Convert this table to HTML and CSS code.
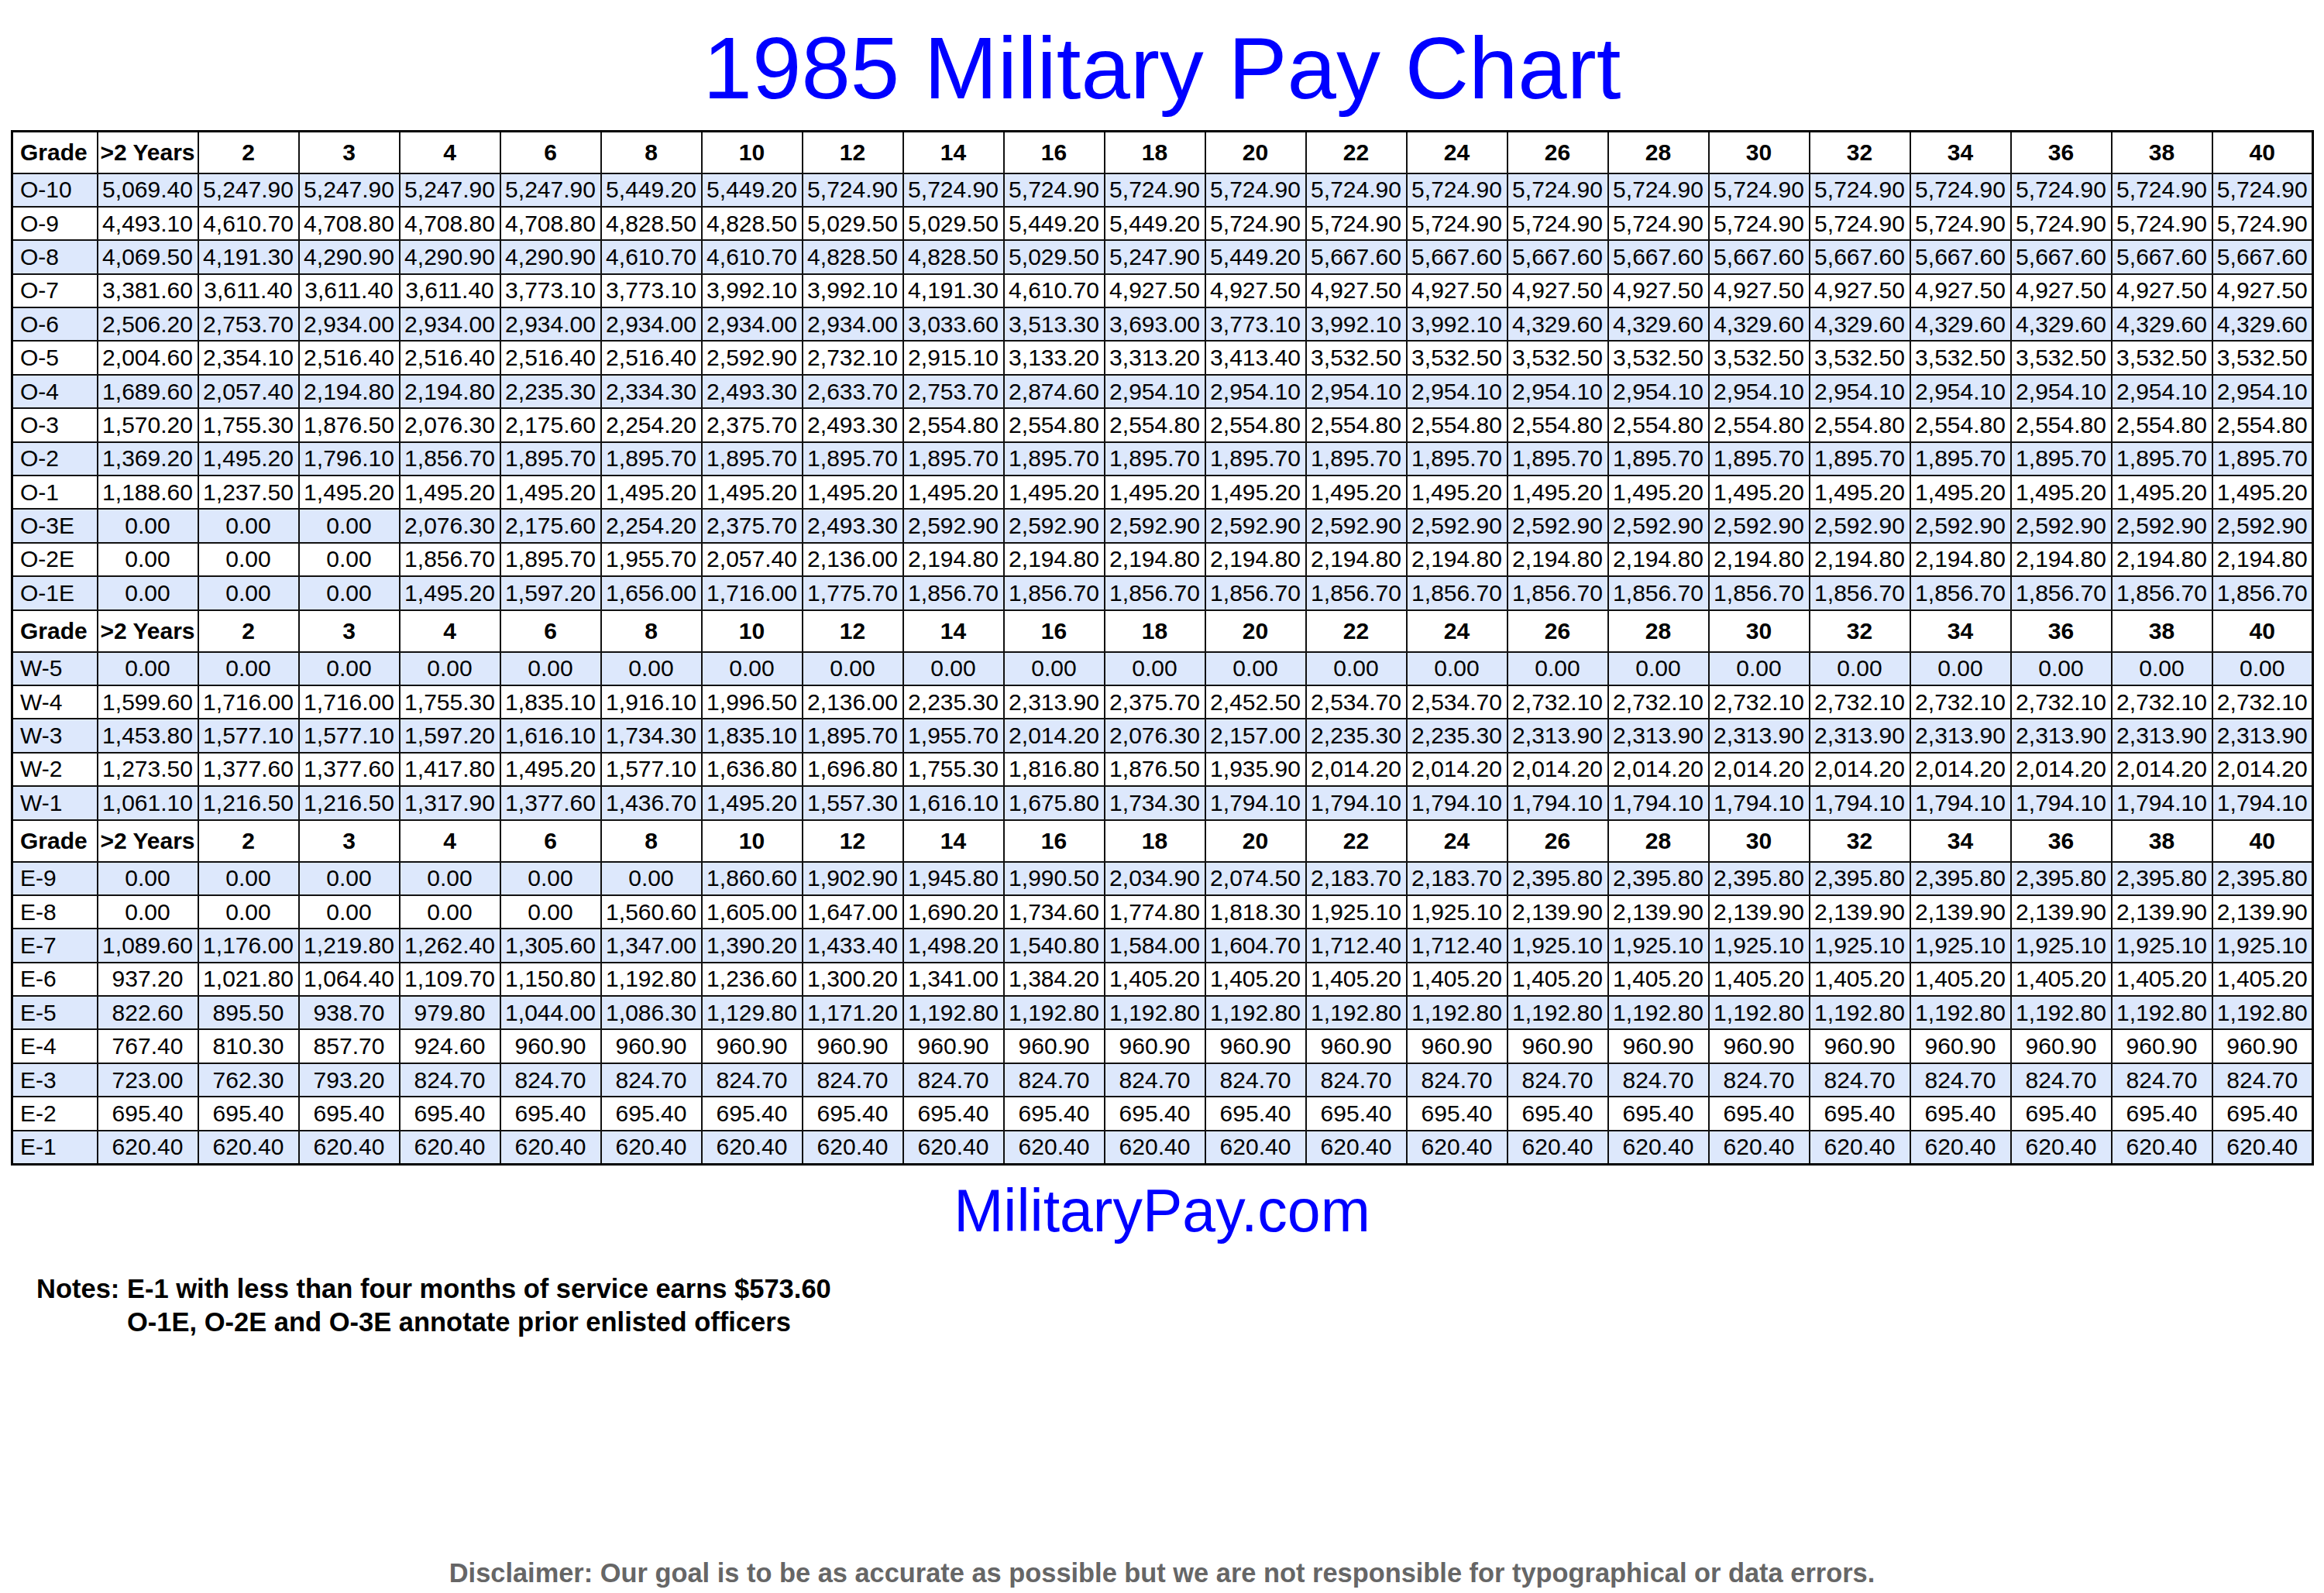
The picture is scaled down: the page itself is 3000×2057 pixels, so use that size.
FILE: index.html
```html
<!DOCTYPE html>
<html lang="en">
<head>
<meta charset="utf-8">
<title>1985 Military Pay Chart</title>
<link rel="stylesheet" href="styles.css">
</head>
<body>
<div class="page">
<h1 class="title">1985 Military Pay Chart</h1>
<table class="pay">
<colgroup><col class="c-grade"><col span="22" class="c-val"></colgroup>
<tbody>
<tr class="hdr"><td class="g">Grade</td><td>&gt;2 Years</td><td>2</td><td>3</td><td>4</td><td>6</td><td>8</td><td>10</td><td>12</td><td>14</td><td>16</td><td>18</td><td>20</td><td>22</td><td>24</td><td>26</td><td>28</td><td>30</td><td>32</td><td>34</td><td>36</td><td>38</td><td>40</td></tr>
<tr class="row alt"><td class="g">O-10</td><td>5,069.40</td><td>5,247.90</td><td>5,247.90</td><td>5,247.90</td><td>5,247.90</td><td>5,449.20</td><td>5,449.20</td><td>5,724.90</td><td>5,724.90</td><td>5,724.90</td><td>5,724.90</td><td>5,724.90</td><td>5,724.90</td><td>5,724.90</td><td>5,724.90</td><td>5,724.90</td><td>5,724.90</td><td>5,724.90</td><td>5,724.90</td><td>5,724.90</td><td>5,724.90</td><td>5,724.90</td></tr>
<tr class="row"><td class="g">O-9</td><td>4,493.10</td><td>4,610.70</td><td>4,708.80</td><td>4,708.80</td><td>4,708.80</td><td>4,828.50</td><td>4,828.50</td><td>5,029.50</td><td>5,029.50</td><td>5,449.20</td><td>5,449.20</td><td>5,724.90</td><td>5,724.90</td><td>5,724.90</td><td>5,724.90</td><td>5,724.90</td><td>5,724.90</td><td>5,724.90</td><td>5,724.90</td><td>5,724.90</td><td>5,724.90</td><td>5,724.90</td></tr>
<tr class="row alt"><td class="g">O-8</td><td>4,069.50</td><td>4,191.30</td><td>4,290.90</td><td>4,290.90</td><td>4,290.90</td><td>4,610.70</td><td>4,610.70</td><td>4,828.50</td><td>4,828.50</td><td>5,029.50</td><td>5,247.90</td><td>5,449.20</td><td>5,667.60</td><td>5,667.60</td><td>5,667.60</td><td>5,667.60</td><td>5,667.60</td><td>5,667.60</td><td>5,667.60</td><td>5,667.60</td><td>5,667.60</td><td>5,667.60</td></tr>
<tr class="row"><td class="g">O-7</td><td>3,381.60</td><td>3,611.40</td><td>3,611.40</td><td>3,611.40</td><td>3,773.10</td><td>3,773.10</td><td>3,992.10</td><td>3,992.10</td><td>4,191.30</td><td>4,610.70</td><td>4,927.50</td><td>4,927.50</td><td>4,927.50</td><td>4,927.50</td><td>4,927.50</td><td>4,927.50</td><td>4,927.50</td><td>4,927.50</td><td>4,927.50</td><td>4,927.50</td><td>4,927.50</td><td>4,927.50</td></tr>
<tr class="row alt"><td class="g">O-6</td><td>2,506.20</td><td>2,753.70</td><td>2,934.00</td><td>2,934.00</td><td>2,934.00</td><td>2,934.00</td><td>2,934.00</td><td>2,934.00</td><td>3,033.60</td><td>3,513.30</td><td>3,693.00</td><td>3,773.10</td><td>3,992.10</td><td>3,992.10</td><td>4,329.60</td><td>4,329.60</td><td>4,329.60</td><td>4,329.60</td><td>4,329.60</td><td>4,329.60</td><td>4,329.60</td><td>4,329.60</td></tr>
<tr class="row"><td class="g">O-5</td><td>2,004.60</td><td>2,354.10</td><td>2,516.40</td><td>2,516.40</td><td>2,516.40</td><td>2,516.40</td><td>2,592.90</td><td>2,732.10</td><td>2,915.10</td><td>3,133.20</td><td>3,313.20</td><td>3,413.40</td><td>3,532.50</td><td>3,532.50</td><td>3,532.50</td><td>3,532.50</td><td>3,532.50</td><td>3,532.50</td><td>3,532.50</td><td>3,532.50</td><td>3,532.50</td><td>3,532.50</td></tr>
<tr class="row alt"><td class="g">O-4</td><td>1,689.60</td><td>2,057.40</td><td>2,194.80</td><td>2,194.80</td><td>2,235.30</td><td>2,334.30</td><td>2,493.30</td><td>2,633.70</td><td>2,753.70</td><td>2,874.60</td><td>2,954.10</td><td>2,954.10</td><td>2,954.10</td><td>2,954.10</td><td>2,954.10</td><td>2,954.10</td><td>2,954.10</td><td>2,954.10</td><td>2,954.10</td><td>2,954.10</td><td>2,954.10</td><td>2,954.10</td></tr>
<tr class="row"><td class="g">O-3</td><td>1,570.20</td><td>1,755.30</td><td>1,876.50</td><td>2,076.30</td><td>2,175.60</td><td>2,254.20</td><td>2,375.70</td><td>2,493.30</td><td>2,554.80</td><td>2,554.80</td><td>2,554.80</td><td>2,554.80</td><td>2,554.80</td><td>2,554.80</td><td>2,554.80</td><td>2,554.80</td><td>2,554.80</td><td>2,554.80</td><td>2,554.80</td><td>2,554.80</td><td>2,554.80</td><td>2,554.80</td></tr>
<tr class="row alt"><td class="g">O-2</td><td>1,369.20</td><td>1,495.20</td><td>1,796.10</td><td>1,856.70</td><td>1,895.70</td><td>1,895.70</td><td>1,895.70</td><td>1,895.70</td><td>1,895.70</td><td>1,895.70</td><td>1,895.70</td><td>1,895.70</td><td>1,895.70</td><td>1,895.70</td><td>1,895.70</td><td>1,895.70</td><td>1,895.70</td><td>1,895.70</td><td>1,895.70</td><td>1,895.70</td><td>1,895.70</td><td>1,895.70</td></tr>
<tr class="row"><td class="g">O-1</td><td>1,188.60</td><td>1,237.50</td><td>1,495.20</td><td>1,495.20</td><td>1,495.20</td><td>1,495.20</td><td>1,495.20</td><td>1,495.20</td><td>1,495.20</td><td>1,495.20</td><td>1,495.20</td><td>1,495.20</td><td>1,495.20</td><td>1,495.20</td><td>1,495.20</td><td>1,495.20</td><td>1,495.20</td><td>1,495.20</td><td>1,495.20</td><td>1,495.20</td><td>1,495.20</td><td>1,495.20</td></tr>
<tr class="row alt"><td class="g">O-3E</td><td>0.00</td><td>0.00</td><td>0.00</td><td>2,076.30</td><td>2,175.60</td><td>2,254.20</td><td>2,375.70</td><td>2,493.30</td><td>2,592.90</td><td>2,592.90</td><td>2,592.90</td><td>2,592.90</td><td>2,592.90</td><td>2,592.90</td><td>2,592.90</td><td>2,592.90</td><td>2,592.90</td><td>2,592.90</td><td>2,592.90</td><td>2,592.90</td><td>2,592.90</td><td>2,592.90</td></tr>
<tr class="row"><td class="g">O-2E</td><td>0.00</td><td>0.00</td><td>0.00</td><td>1,856.70</td><td>1,895.70</td><td>1,955.70</td><td>2,057.40</td><td>2,136.00</td><td>2,194.80</td><td>2,194.80</td><td>2,194.80</td><td>2,194.80</td><td>2,194.80</td><td>2,194.80</td><td>2,194.80</td><td>2,194.80</td><td>2,194.80</td><td>2,194.80</td><td>2,194.80</td><td>2,194.80</td><td>2,194.80</td><td>2,194.80</td></tr>
<tr class="row alt"><td class="g">O-1E</td><td>0.00</td><td>0.00</td><td>0.00</td><td>1,495.20</td><td>1,597.20</td><td>1,656.00</td><td>1,716.00</td><td>1,775.70</td><td>1,856.70</td><td>1,856.70</td><td>1,856.70</td><td>1,856.70</td><td>1,856.70</td><td>1,856.70</td><td>1,856.70</td><td>1,856.70</td><td>1,856.70</td><td>1,856.70</td><td>1,856.70</td><td>1,856.70</td><td>1,856.70</td><td>1,856.70</td></tr>
<tr class="hdr"><td class="g">Grade</td><td>&gt;2 Years</td><td>2</td><td>3</td><td>4</td><td>6</td><td>8</td><td>10</td><td>12</td><td>14</td><td>16</td><td>18</td><td>20</td><td>22</td><td>24</td><td>26</td><td>28</td><td>30</td><td>32</td><td>34</td><td>36</td><td>38</td><td>40</td></tr>
<tr class="row alt"><td class="g">W-5</td><td>0.00</td><td>0.00</td><td>0.00</td><td>0.00</td><td>0.00</td><td>0.00</td><td>0.00</td><td>0.00</td><td>0.00</td><td>0.00</td><td>0.00</td><td>0.00</td><td>0.00</td><td>0.00</td><td>0.00</td><td>0.00</td><td>0.00</td><td>0.00</td><td>0.00</td><td>0.00</td><td>0.00</td><td>0.00</td></tr>
<tr class="row"><td class="g">W-4</td><td>1,599.60</td><td>1,716.00</td><td>1,716.00</td><td>1,755.30</td><td>1,835.10</td><td>1,916.10</td><td>1,996.50</td><td>2,136.00</td><td>2,235.30</td><td>2,313.90</td><td>2,375.70</td><td>2,452.50</td><td>2,534.70</td><td>2,534.70</td><td>2,732.10</td><td>2,732.10</td><td>2,732.10</td><td>2,732.10</td><td>2,732.10</td><td>2,732.10</td><td>2,732.10</td><td>2,732.10</td></tr>
<tr class="row alt"><td class="g">W-3</td><td>1,453.80</td><td>1,577.10</td><td>1,577.10</td><td>1,597.20</td><td>1,616.10</td><td>1,734.30</td><td>1,835.10</td><td>1,895.70</td><td>1,955.70</td><td>2,014.20</td><td>2,076.30</td><td>2,157.00</td><td>2,235.30</td><td>2,235.30</td><td>2,313.90</td><td>2,313.90</td><td>2,313.90</td><td>2,313.90</td><td>2,313.90</td><td>2,313.90</td><td>2,313.90</td><td>2,313.90</td></tr>
<tr class="row"><td class="g">W-2</td><td>1,273.50</td><td>1,377.60</td><td>1,377.60</td><td>1,417.80</td><td>1,495.20</td><td>1,577.10</td><td>1,636.80</td><td>1,696.80</td><td>1,755.30</td><td>1,816.80</td><td>1,876.50</td><td>1,935.90</td><td>2,014.20</td><td>2,014.20</td><td>2,014.20</td><td>2,014.20</td><td>2,014.20</td><td>2,014.20</td><td>2,014.20</td><td>2,014.20</td><td>2,014.20</td><td>2,014.20</td></tr>
<tr class="row alt"><td class="g">W-1</td><td>1,061.10</td><td>1,216.50</td><td>1,216.50</td><td>1,317.90</td><td>1,377.60</td><td>1,436.70</td><td>1,495.20</td><td>1,557.30</td><td>1,616.10</td><td>1,675.80</td><td>1,734.30</td><td>1,794.10</td><td>1,794.10</td><td>1,794.10</td><td>1,794.10</td><td>1,794.10</td><td>1,794.10</td><td>1,794.10</td><td>1,794.10</td><td>1,794.10</td><td>1,794.10</td><td>1,794.10</td></tr>
<tr class="hdr"><td class="g">Grade</td><td>&gt;2 Years</td><td>2</td><td>3</td><td>4</td><td>6</td><td>8</td><td>10</td><td>12</td><td>14</td><td>16</td><td>18</td><td>20</td><td>22</td><td>24</td><td>26</td><td>28</td><td>30</td><td>32</td><td>34</td><td>36</td><td>38</td><td>40</td></tr>
<tr class="row alt"><td class="g">E-9</td><td>0.00</td><td>0.00</td><td>0.00</td><td>0.00</td><td>0.00</td><td>0.00</td><td>1,860.60</td><td>1,902.90</td><td>1,945.80</td><td>1,990.50</td><td>2,034.90</td><td>2,074.50</td><td>2,183.70</td><td>2,183.70</td><td>2,395.80</td><td>2,395.80</td><td>2,395.80</td><td>2,395.80</td><td>2,395.80</td><td>2,395.80</td><td>2,395.80</td><td>2,395.80</td></tr>
<tr class="row"><td class="g">E-8</td><td>0.00</td><td>0.00</td><td>0.00</td><td>0.00</td><td>0.00</td><td>1,560.60</td><td>1,605.00</td><td>1,647.00</td><td>1,690.20</td><td>1,734.60</td><td>1,774.80</td><td>1,818.30</td><td>1,925.10</td><td>1,925.10</td><td>2,139.90</td><td>2,139.90</td><td>2,139.90</td><td>2,139.90</td><td>2,139.90</td><td>2,139.90</td><td>2,139.90</td><td>2,139.90</td></tr>
<tr class="row alt"><td class="g">E-7</td><td>1,089.60</td><td>1,176.00</td><td>1,219.80</td><td>1,262.40</td><td>1,305.60</td><td>1,347.00</td><td>1,390.20</td><td>1,433.40</td><td>1,498.20</td><td>1,540.80</td><td>1,584.00</td><td>1,604.70</td><td>1,712.40</td><td>1,712.40</td><td>1,925.10</td><td>1,925.10</td><td>1,925.10</td><td>1,925.10</td><td>1,925.10</td><td>1,925.10</td><td>1,925.10</td><td>1,925.10</td></tr>
<tr class="row"><td class="g">E-6</td><td>937.20</td><td>1,021.80</td><td>1,064.40</td><td>1,109.70</td><td>1,150.80</td><td>1,192.80</td><td>1,236.60</td><td>1,300.20</td><td>1,341.00</td><td>1,384.20</td><td>1,405.20</td><td>1,405.20</td><td>1,405.20</td><td>1,405.20</td><td>1,405.20</td><td>1,405.20</td><td>1,405.20</td><td>1,405.20</td><td>1,405.20</td><td>1,405.20</td><td>1,405.20</td><td>1,405.20</td></tr>
<tr class="row alt"><td class="g">E-5</td><td>822.60</td><td>895.50</td><td>938.70</td><td>979.80</td><td>1,044.00</td><td>1,086.30</td><td>1,129.80</td><td>1,171.20</td><td>1,192.80</td><td>1,192.80</td><td>1,192.80</td><td>1,192.80</td><td>1,192.80</td><td>1,192.80</td><td>1,192.80</td><td>1,192.80</td><td>1,192.80</td><td>1,192.80</td><td>1,192.80</td><td>1,192.80</td><td>1,192.80</td><td>1,192.80</td></tr>
<tr class="row"><td class="g">E-4</td><td>767.40</td><td>810.30</td><td>857.70</td><td>924.60</td><td>960.90</td><td>960.90</td><td>960.90</td><td>960.90</td><td>960.90</td><td>960.90</td><td>960.90</td><td>960.90</td><td>960.90</td><td>960.90</td><td>960.90</td><td>960.90</td><td>960.90</td><td>960.90</td><td>960.90</td><td>960.90</td><td>960.90</td><td>960.90</td></tr>
<tr class="row alt"><td class="g">E-3</td><td>723.00</td><td>762.30</td><td>793.20</td><td>824.70</td><td>824.70</td><td>824.70</td><td>824.70</td><td>824.70</td><td>824.70</td><td>824.70</td><td>824.70</td><td>824.70</td><td>824.70</td><td>824.70</td><td>824.70</td><td>824.70</td><td>824.70</td><td>824.70</td><td>824.70</td><td>824.70</td><td>824.70</td><td>824.70</td></tr>
<tr class="row"><td class="g">E-2</td><td>695.40</td><td>695.40</td><td>695.40</td><td>695.40</td><td>695.40</td><td>695.40</td><td>695.40</td><td>695.40</td><td>695.40</td><td>695.40</td><td>695.40</td><td>695.40</td><td>695.40</td><td>695.40</td><td>695.40</td><td>695.40</td><td>695.40</td><td>695.40</td><td>695.40</td><td>695.40</td><td>695.40</td><td>695.40</td></tr>
<tr class="row alt"><td class="g">E-1</td><td>620.40</td><td>620.40</td><td>620.40</td><td>620.40</td><td>620.40</td><td>620.40</td><td>620.40</td><td>620.40</td><td>620.40</td><td>620.40</td><td>620.40</td><td>620.40</td><td>620.40</td><td>620.40</td><td>620.40</td><td>620.40</td><td>620.40</td><td>620.40</td><td>620.40</td><td>620.40</td><td>620.40</td><td>620.40</td></tr>
</tbody>
</table>
<div class="site">MilitaryPay.com</div>
<div class="notes">
<span class="notes-label">Notes:&nbsp;</span>
<div class="notes-lines">
<div>E-1 with less than four months of service earns $573.60</div>
<div>O-1E, O-2E and O-3E annotate prior enlisted officers</div>
</div>
</div>
<div class="disclaimer">Disclaimer: Our goal is to be as accurate as possible but we are not responsible for typographical or data errors.</div>
</div>
</body>
</html>
```
FILE: styles.css
```css
html, body {
  margin: 0;
  padding: 0;
  background: #ffffff;
}
body {
  font-family: "Liberation Sans", Arial, Helvetica, sans-serif;
  color: #000000;
}
.page {
  width: 2972px;
  padding: 13px 14px 6px;
}
.title {
  margin: 0;
  font-size: 114px;
  font-weight: normal;
  line-height: 150px;
  text-align: center;
  color: #0000ff;
}
.pay {
  margin-top: 5px;
  width: 2972px;
  table-layout: fixed;
  border-collapse: collapse;
  border: 3px solid #000000;
}
.c-grade { width: 110px; }
.c-val { width: 130px; }
.pay td {
  border: 2px solid #111111;
  padding: 0;
  font-size: 30px;
  text-align: center;
  white-space: nowrap;
  overflow: hidden;
}
.pay td.g {
  text-align: left;
  padding-left: 9px;
}
.pay tr.hdr {
  height: 54px;
}
.pay tr.hdr td {
  font-weight: bold;
}
.pay tr.row {
  height: 43.4px;
}
.pay tr.alt td {
  background: #dde8fc;
}
.site {
  margin-top: 13px;
  font-size: 77px;
  line-height: 90px;
  text-align: center;
  color: #0000ff;
}
.notes {
  display: flex;
  margin: 35px 0 0 33px;
  font-size: 34.5px;
  font-weight: bold;
  line-height: 43px;
}
.notes-label {
  white-space: pre;
}
.disclaimer {
  margin-top: 282px;
  font-size: 34.4px;
  font-weight: bold;
  line-height: 40px;
  text-align: center;
  color: #666666;
}
```
